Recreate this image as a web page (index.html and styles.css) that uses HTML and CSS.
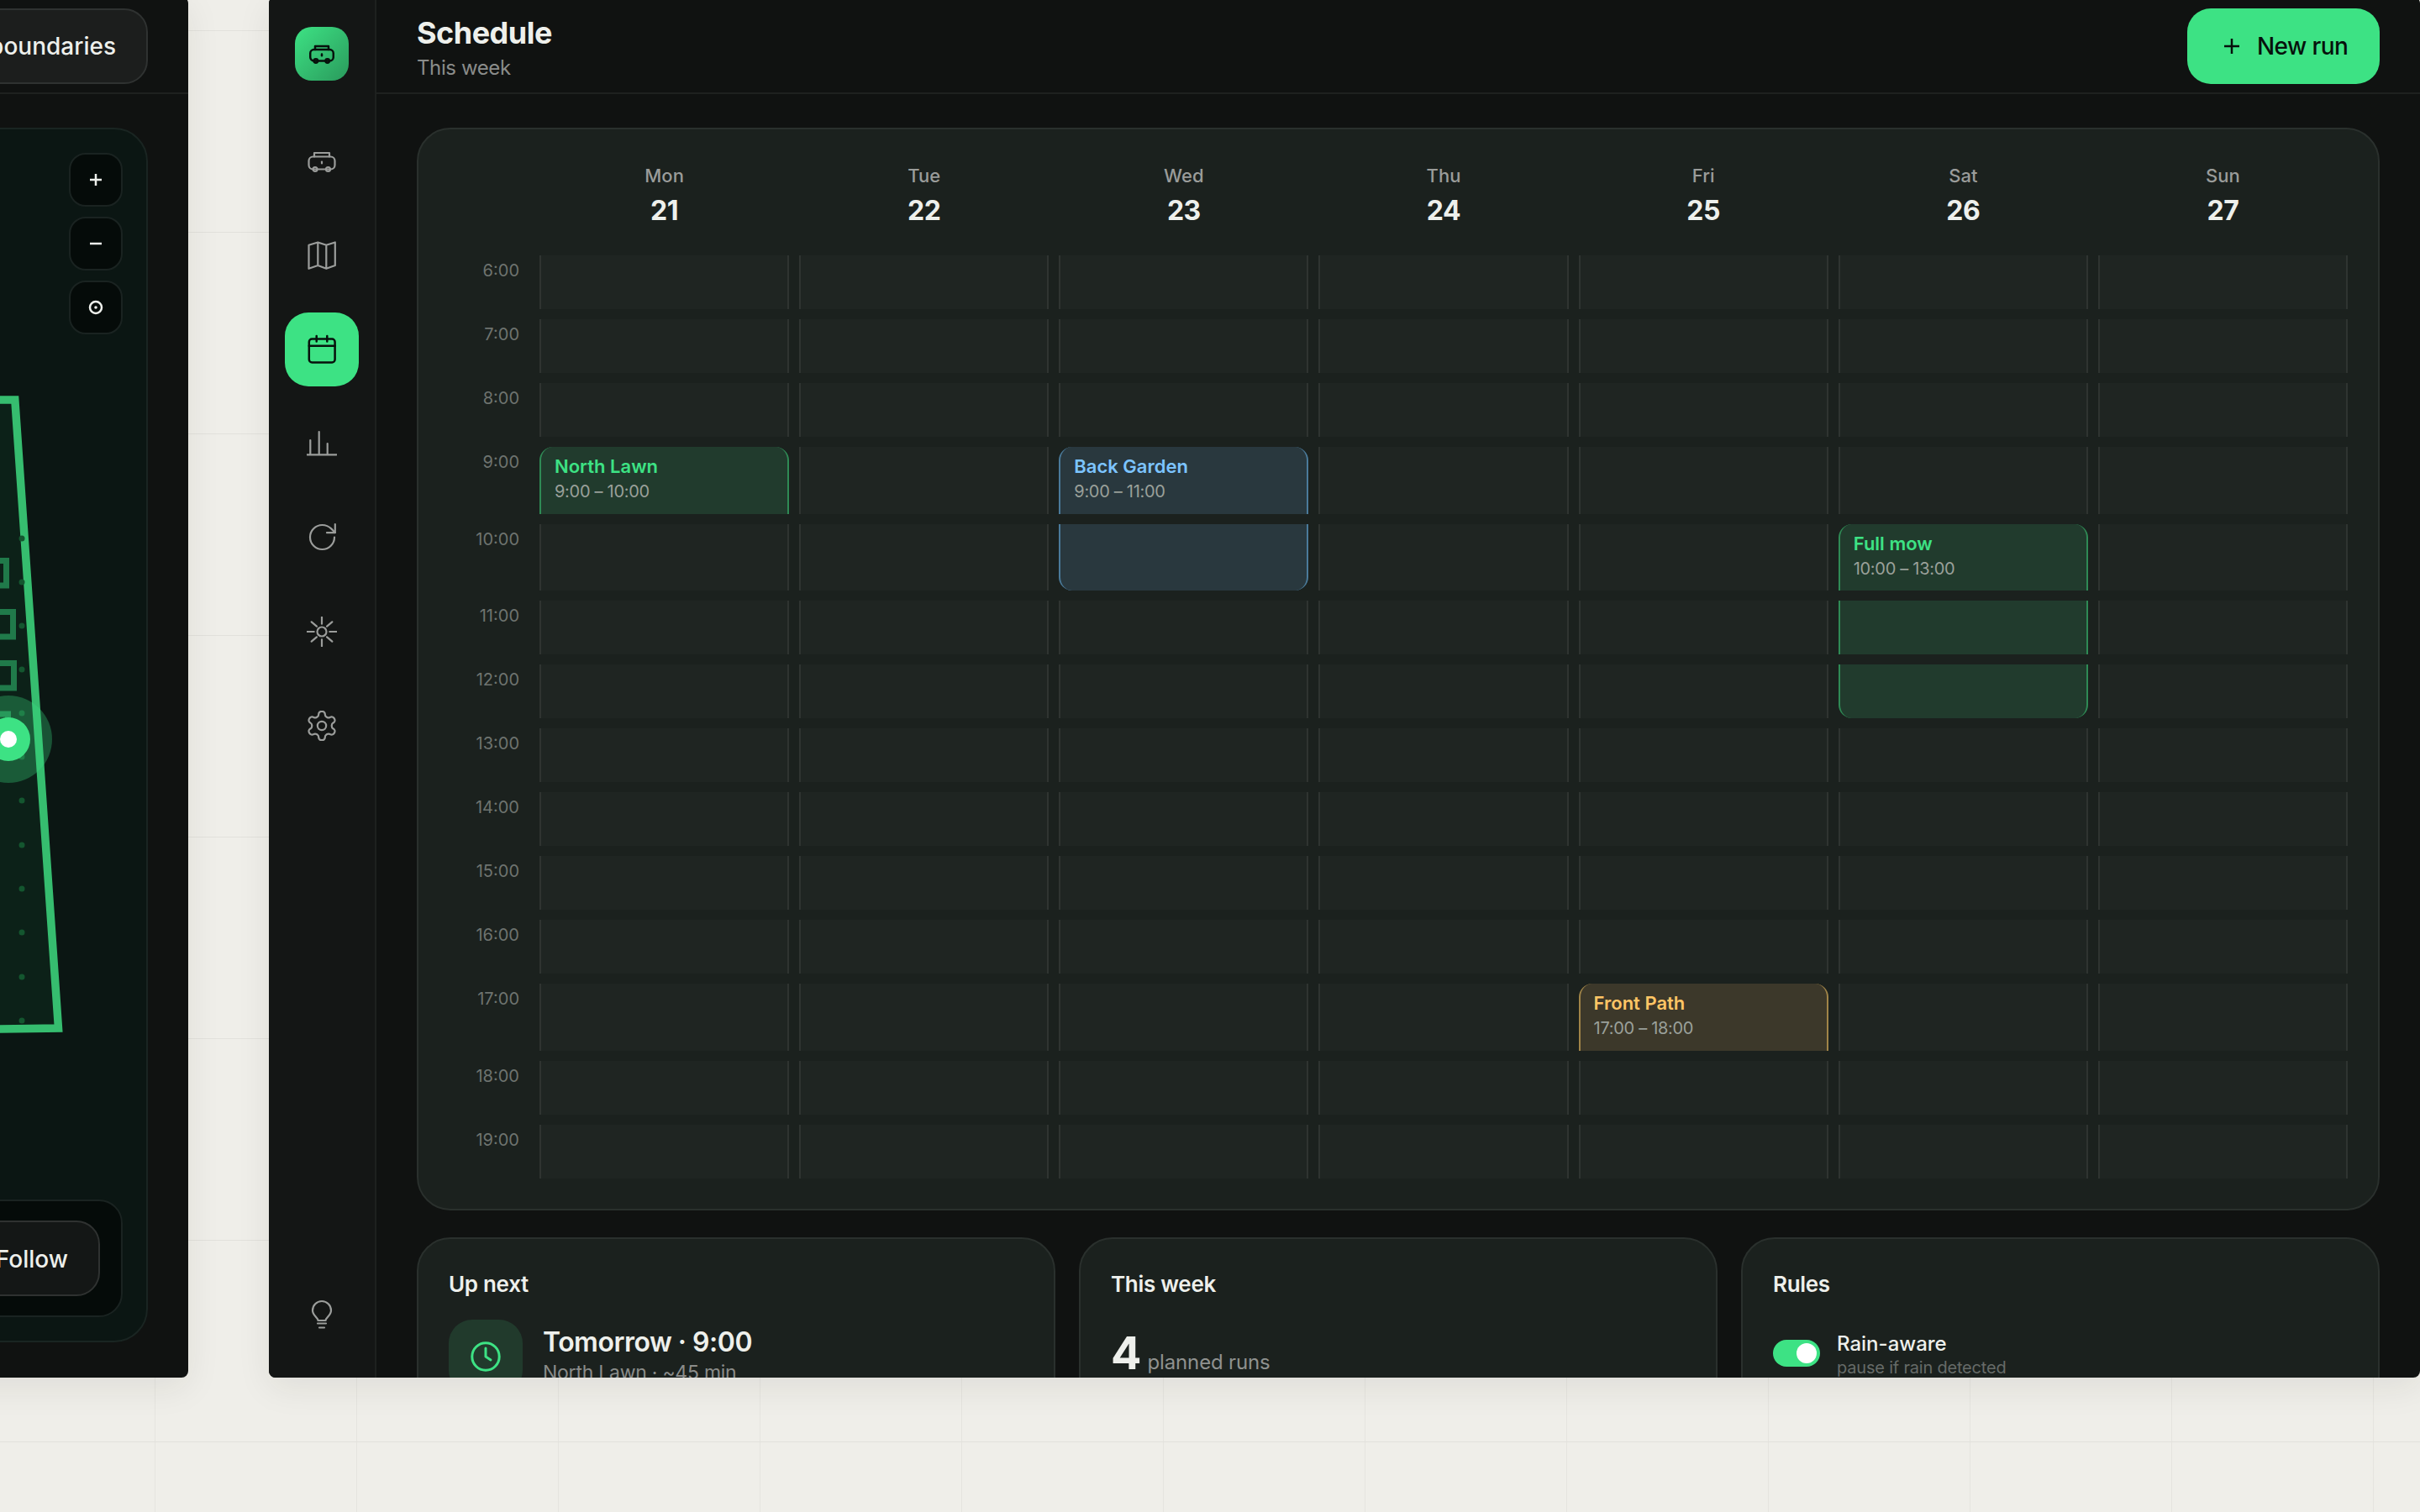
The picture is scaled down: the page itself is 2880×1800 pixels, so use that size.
FILE: index.html
```html
<!DOCTYPE html>
<html lang="en">
<head>
<meta charset="utf-8">
<title>Mower planner</title>
<link rel="stylesheet" href="styles.css">
</head>
<body>
<section class="window window-map">
  <header class="topbar topbar-end">
    <button class="ghost-btn">Edit boundaries</button>
  </header>
  <div class="map-main">
    <div class="map-card">
      <svg class="lawn" viewBox="0 152 176 1446" width="176" height="1446">
        <polygon class="lawn-shape" points="-60,476 17.8,476 69.5,1224 -60,1226"/>
        <g class="lawn-obstacle">
          <rect x="-30" y="667.5" width="37.5" height="29.5"/>
          <rect x="-30" y="728.5" width="45.5" height="29.5"/>
          <rect x="-30" y="789.5" width="46.5" height="29.5"/>
          <rect x="-30" y="850" width="39.5" height="30"/>
        </g>
        <g class="lawn-dots">
          <circle cx="26" cy="641" r="3.5"/><circle cx="26" cy="693" r="3.5"/><circle cx="26" cy="745" r="3.5"/><circle cx="26" cy="797" r="3.5"/><circle cx="26" cy="849" r="3.5"/><circle cx="26" cy="901" r="3.5"/><circle cx="26" cy="953" r="3.5"/><circle cx="26" cy="1006" r="3.5"/><circle cx="26" cy="1058" r="3.5"/><circle cx="26" cy="1110" r="3.5"/><circle cx="26" cy="1163" r="3.5"/><circle cx="26" cy="1215" r="3.5"/>
        </g>
        <circle class="mower-halo" cx="10" cy="880" r="52"/>
        <circle class="mower-ring" cx="10" cy="880" r="26"/>
        <circle class="mower-core" cx="10" cy="880" r="10"/>
      </svg>
      <div class="map-tools">
        <button class="tool"><svg viewBox="0 0 16 16" width="16" height="16"><path d="M8 1v14M1 8h14"/></svg></button>
        <button class="tool"><svg viewBox="0 0 16 16" width="16" height="16"><path d="M1 8h14"/></svg></button>
        <button class="tool"><svg viewBox="0 0 18 18" width="18" height="18"><circle cx="9" cy="9" r="7"/><circle class="tool-dot" cx="9" cy="9" r="1.8"/></svg></button>
      </div>
      <div class="map-actions"><button class="ghost-btn follow">Follow</button></div>
    </div>
  </div>
</section>

<section class="window window-schedule">
  <aside class="sidebar">
    <div class="logo">
      <svg class="icon logo-icon" viewBox="0 0 36 36"><rect x="2.5" y="12.5" width="31" height="15" rx="5"/><path d="M9 12.5V8h18v4.500"/><circle cx="10" cy="27.500" r="2.500"/><circle cx="25.500" cy="27.500" r="2.500"/><path d="M18 18.500v2"/></svg>
    </div>
    <nav class="nav">
      <a class="nav-item"><svg class="icon" viewBox="0 0 36 36"><rect x="2.500" y="12.500" width="31" height="15" rx="5"/><path d="M9 12.500V8h18v4.500"/><circle cx="10" cy="27.500" r="2.500"/><circle cx="25.500" cy="27.500" r="2.500"/><path d="M18 18.500v2"/></svg></a>
      <a class="nav-item"><svg class="icon" viewBox="0 0 36 36"><path d="M2.500 5.800 13.300 2.500 23.300 5.800 33.800 2.500V30L23.300 33.800 13.300 30 2.500 33.800zM13.300 2.500V30M23.300 5.800V33.800"/></svg></a>
      <a class="nav-item is-active"><svg class="icon" viewBox="0 0 36 36"><rect x="2.800" y="5.500" width="30.800" height="28" rx="3.500"/><path d="M2.800 13.800h30.800M11.700 2v6.500M24.300 2v6.500"/></svg></a>
      <a class="nav-item"><svg class="icon" viewBox="0 0 36 36"><path d="M.5 31.300h35M4.300 31.300V14M14.700 31.300V4M24.700 31.300V18"/></svg></a>
      <a class="nav-item"><svg class="icon" viewBox="0 0 36 36"><path d="M33 17.500a14.500 14.500 0 1 1-14.500-14.500c4 0 7.800 1.600 10.700 4.400L33.800 12"/><path d="M33.800 2v10.200H24"/></svg></a>
      <a class="nav-item"><svg class="icon" viewBox="0 0 36 36"><circle cx="18" cy="18" r="5.500"/><path d="M18 .7v8M18 27.300v8M.7 18h8M27.300 18h8M5.700 6.300l6.200 5.400M24.100 24.300l6.200 5.400M30.300 6.300l-6.200 5.400M11.900 24.300l-6.200 5.400"/></svg></a>
      <a class="nav-item"><svg class="icon" viewBox="1.500 1.500 21 21"><g class="gear"><path d="M12.220 2h-.44a2 2 0 0 0-2 2v.18a2 2 0 0 1-1 1.730l-.43.250a2 2 0 0 1-2 0l-.15-.08a2 2 0 0 0-2.730.730l-.22.380a2 2 0 0 0 .730 2.730l.15.100a2 2 0 0 1 1 1.720v.510a2 2 0 0 1-1 1.740l-.15.090a2 2 0 0 0-.730 2.730l.22.380a2 2 0 0 0 2.730.730l.15-.08a2 2 0 0 1 2 0l.43.250a2 2 0 0 1 1 1.730V20a2 2 0 0 0 2 2h.44a2 2 0 0 0 2-2v-.18a2 2 0 0 1 1-1.730l.43-.25a2 2 0 0 1 2 0l.15.08a2 2 0 0 0 2.730-.730l.22-.39a2 2 0 0 0-.730-2.730l-.15-.08a2 2 0 0 1-1-1.740v-.5a2 2 0 0 1 1-1.740l.15-.09a2 2 0 0 0 .730-2.730l-.22-.38a2 2 0 0 0-2.730-.730l-.15.08a2 2 0 0 1-2 0l-.43-.25a2 2 0 0 1-1-1.730V4a2 2 0 0 0-2-2z"/><circle cx="12" cy="12" r="3"/></g></svg></a>
    </nav>
    <a class="nav-item nav-bottom"><svg class="icon" viewBox="0 0 36 36"><path d="M13.500 26c-.5-4-6.500-6-6.500-12a11 11 0 0 1 22 0c0 6-6 8-6.500 12z"/><path d="M13 29.500h10M15 34.500h6"/></svg></a>
  </aside>
  <div class="content">
    <header class="topbar">
      <div class="title-block">
        <h1 class="title">Schedule</h1>
        <p class="subtitle">This week</p>
      </div>
      <button class="primary-btn"><svg class="plus" viewBox="0 0 20 20" width="20" height="20"><path d="M10 1v18M1 10h18"/></svg>New run</button>
    </header>
    <main class="page">
      <section class="calendar">
        <div class="cal-grid">
          <div></div>
          <div class="day"><span class="day-name">Mon</span><span class="day-num">21</span></div>
          <div class="day"><span class="day-name">Tue</span><span class="day-num">22</span></div>
          <div class="day"><span class="day-name">Wed</span><span class="day-num">23</span></div>
          <div class="day"><span class="day-name">Thu</span><span class="day-num">24</span></div>
          <div class="day"><span class="day-name">Fri</span><span class="day-num">25</span></div>
          <div class="day"><span class="day-name">Sat</span><span class="day-num">26</span></div>
          <div class="day"><span class="day-name">Sun</span><span class="day-num">27</span></div>

          <div class="hour">6:00</div><div class="cell"></div><div class="cell"></div><div class="cell"></div><div class="cell"></div><div class="cell"></div><div class="cell"></div><div class="cell"></div>
          <div class="hour">7:00</div><div class="cell"></div><div class="cell"></div><div class="cell"></div><div class="cell"></div><div class="cell"></div><div class="cell"></div><div class="cell"></div>
          <div class="hour">8:00</div><div class="cell"></div><div class="cell"></div><div class="cell"></div><div class="cell"></div><div class="cell"></div><div class="cell"></div><div class="cell"></div>
          <div class="hour">9:00</div>
          <div class="cell ev ev-green ev-first"><div class="ev-title">North Lawn</div><div class="ev-time">9:00 – 10:00</div></div>
          <div class="cell"></div>
          <div class="cell ev ev-blue ev-first"><div class="ev-title">Back Garden</div><div class="ev-time">9:00 – 11:00</div></div>
          <div class="cell"></div><div class="cell"></div><div class="cell"></div><div class="cell"></div>
          <div class="hour">10:00</div>
          <div class="cell"></div><div class="cell"></div>
          <div class="cell ev ev-blue ev-last"></div>
          <div class="cell"></div><div class="cell"></div>
          <div class="cell ev ev-green ev-first"><div class="ev-title">Full mow</div><div class="ev-time">10:00 – 13:00</div></div>
          <div class="cell"></div>
          <div class="hour">11:00</div><div class="cell"></div><div class="cell"></div><div class="cell"></div><div class="cell"></div><div class="cell"></div><div class="cell ev ev-green"></div><div class="cell"></div>
          <div class="hour">12:00</div><div class="cell"></div><div class="cell"></div><div class="cell"></div><div class="cell"></div><div class="cell"></div><div class="cell ev ev-green ev-last"></div><div class="cell"></div>
          <div class="hour">13:00</div><div class="cell"></div><div class="cell"></div><div class="cell"></div><div class="cell"></div><div class="cell"></div><div class="cell"></div><div class="cell"></div>
          <div class="hour">14:00</div><div class="cell"></div><div class="cell"></div><div class="cell"></div><div class="cell"></div><div class="cell"></div><div class="cell"></div><div class="cell"></div>
          <div class="hour">15:00</div><div class="cell"></div><div class="cell"></div><div class="cell"></div><div class="cell"></div><div class="cell"></div><div class="cell"></div><div class="cell"></div>
          <div class="hour">16:00</div><div class="cell"></div><div class="cell"></div><div class="cell"></div><div class="cell"></div><div class="cell"></div><div class="cell"></div><div class="cell"></div>
          <div class="hour">17:00</div><div class="cell"></div><div class="cell"></div><div class="cell"></div><div class="cell"></div>
          <div class="cell ev ev-amber ev-first"><div class="ev-title">Front Path</div><div class="ev-time">17:00 – 18:00</div></div>
          <div class="cell"></div><div class="cell"></div>
          <div class="hour">18:00</div><div class="cell"></div><div class="cell"></div><div class="cell"></div><div class="cell"></div><div class="cell"></div><div class="cell"></div><div class="cell"></div>
          <div class="hour">19:00</div><div class="cell"></div><div class="cell"></div><div class="cell"></div><div class="cell"></div><div class="cell"></div><div class="cell"></div><div class="cell"></div>
        </div>
      </section>
      <section class="summary">
        <article class="panel">
          <h2 class="panel-title">Up next</h2>
          <div class="next">
            <div class="next-tile"><svg class="clock" viewBox="0 0 36 36" width="36" height="36"><circle cx="18" cy="18" r="16.200"/><path d="M18 8v10l6 4"/></svg></div>
            <div class="next-text">
              <div class="next-main">Tomorrow · 9:00</div>
              <div class="next-sub">North Lawn · ~45 min</div>
            </div>
          </div>
        </article>
        <article class="panel">
          <h2 class="panel-title">This week</h2>
          <div class="stat"><span class="stat-num">4</span><span class="stat-label">planned runs</span></div>
        </article>
        <article class="panel">
          <h2 class="panel-title">Rules</h2>
          <div class="rule">
            <span class="toggle"><span class="toggle-knob"></span></span>
            <div class="rule-text">
              <div class="rule-name">Rain-aware</div>
              <div class="rule-desc">pause if rain detected</div>
            </div>
          </div>
        </article>
      </section>
    </main>
  </div>
</section>
</body>
</html>
```

FILE: styles.css
```css
* { box-sizing: border-box; }
html, body { height: 100%; }
body {
  margin: 0;
  overflow: hidden;
  font-family: "Inter", "Liberation Sans", sans-serif;
  background-color: #efeee9;
  background-image:
    linear-gradient(#e2e1dc 1px, transparent 1px),
    linear-gradient(90deg, #e5e4df 1px, transparent 1px);
  background-size: 240px 240px;
  background-position: 0 36px, 184px 0;
}
h1, h2, p { margin: 0; }
button { font-family: inherit; cursor: pointer; }

/* windows on the desktop */
.window {
  position: absolute;
  top: -4px;
  width: 2560px;
  height: 1644px;
  background: #101211;
  border-radius: 8px;
  overflow: hidden;
  box-shadow: 0 12px 40px rgba(40, 40, 30, .08);
}
.window-map { left: -2336px; display: flex; flex-direction: column; }
.window-schedule { left: 320px; display: flex; }

.topbar {
  flex: none;
  height: 116px;
  padding: 14px 48px 0;
  border-bottom: 2px solid #1e211f;
  display: flex;
  align-items: flex-start;
  justify-content: space-between;
}
.topbar-end { justify-content: flex-end; }

.ghost-btn {
  height: 90px;
  padding: 0 36px;
  border: 2px solid #2f3231;
  border-radius: 28px;
  background: #1c1e1d;
  color: #eef0ec;
  font-size: 28px;
  font-weight: 500;
}

/* map window */
.map-main { flex: 1; padding: 40px 48px 42px; display: flex; min-height: 0; }
.map-card {
  position: relative;
  flex: 1;
  background: #0b1613;
  border: 2px solid #1a2522;
  border-radius: 40px;
  overflow: hidden;
}
.lawn { position: absolute; right: -2px; top: -2px; }
.lawn-shape { fill: #0c2118; stroke: #36bd6f; stroke-width: 9.500; stroke-linejoin: miter; }
.lawn-obstacle rect { fill: none; stroke: #207a4a; stroke-width: 7; }
.lawn-dots circle { fill: #14562f; }
.mower-halo { fill: #3de284; opacity: .3; }
.mower-ring { fill: #3de284; }
.mower-core { fill: #fff; }
.map-tools {
  position: absolute;
  top: 28px;
  right: 28px;
  display: flex;
  flex-direction: column;
  gap: 12px;
}
.tool {
  width: 64px;
  height: 64px;
  padding: 0;
  display: flex;
  align-items: center;
  justify-content: center;
  background: #050b09;
  border: 2px solid #1a2321;
  border-radius: 20px;
}
.tool svg { fill: none; stroke: #eef0ec; stroke-width: 2.500; }
.tool .tool-dot { fill: #eef0ec; stroke: none; }
.map-actions {
  position: absolute;
  right: 28px;
  bottom: 28px;
  padding: 23px 25px;
  background: #050b09;
  border: 2px solid #1a2321;
  border-radius: 28px;
}
.follow { display: block; background: #141716; padding: 2px 36px 0 36px; }

/* schedule window */
.sidebar {
  flex: none;
  width: 128px;
  padding: 36px 0 32px;
  background: #141615;
  border-right: 2px solid #1e211f;
  display: flex;
  flex-direction: column;
  align-items: center;
}
.logo {
  width: 64px;
  height: 64px;
  flex: none;
  border-radius: 20px;
  background: linear-gradient(135deg, #3de284, #2a9a5c);
  display: flex;
  align-items: center;
  justify-content: center;
}
.icon {
  width: 36px;
  height: 36px;
  fill: none;
  stroke: #9b9d9b;
  stroke-width: 2.200;
  stroke-linecap: round;
  stroke-linejoin: round;
}
.logo-icon { width: 32px; height: 32px; stroke: #07110c; stroke-width: 2.800; }
.nav { margin-top: 52px; display: flex; flex-direction: column; gap: 24px; }
.nav-item {
  width: 88px;
  height: 88px;
  border-radius: 28px;
  display: flex;
  align-items: center;
  justify-content: center;
}
.nav-item.is-active { background: #3de284; }
.is-active .icon { stroke: #07110c; stroke-width: 2.500; }
.gear { stroke-width: 1.300; }
.nav-bottom { margin-top: auto; }

.content { flex: 1; min-width: 0; display: flex; flex-direction: column; }
.title { font-size: 36px; font-weight: 700; line-height: 44px; color: #eef0ec; letter-spacing: -.5px; }
.subtitle { font-size: 24px; line-height: 32px; color: #8a8c8a; margin-top: 4px; letter-spacing: -.4px; }
.title-block { padding-top: 7px; }
.primary-btn {
  width: 229px;
  height: 90px;
  display: flex;
  align-items: center;
  gap: 20px;
  padding: 0 0 0 43px;
  background: #3de284;
  border: 0;
  border-radius: 28px;
  color: #07110c;
  font-size: 28px;
  font-weight: 500;
  letter-spacing: -.6px;
}
.plus { fill: none; stroke: #07110c; stroke-width: 2.500; flex: none; }

.page { flex: 1; min-height: 0; padding: 40px 48px 0; display: flex; flex-direction: column; gap: 32px; }
.calendar {
  flex: none;
  background: #1b211e;
  border: 2px solid #2a302d;
  border-radius: 40px;
  padding: 36px;
}
.cal-grid {
  display: grid;
  grid-template-columns: 96px repeat(7, 1fr);
  gap: 12px;
}
.day { height: 102px; padding-top: 4px; display: flex; flex-direction: column; align-items: center; }
.day-name { font-size: 22px; line-height: 30px; font-weight: 500; color: #9a9c9a; }
.day-num { font-size: 32px; line-height: 44px; font-weight: 700; color: #eef0ec; margin-top: 5px; letter-spacing: -.5px; }
.hour { padding: 4px 12px 0 0; font-size: 20px; line-height: 28px; color: #6e736f; text-align: right; }
.cell {
  min-height: 64px;
  background: #1f2522;
  border-style: solid;
  border-color: #2f3431;
  border-width: 0 2px;
}
.ev { padding: 8px 16px 0; min-height: 64px; }
.ev-first { border-top-left-radius: 16px; border-top-right-radius: 16px; }
.ev-last { border-bottom-left-radius: 16px; border-bottom-right-radius: 16px; }
.ev-title { font-size: 22px; line-height: 30px; font-weight: 600; }
.ev-time { font-size: 20px; line-height: 28px; margin-top: 1px; padding-bottom: 12.500px; color: #9aa09a; letter-spacing: -.3px; }
.ev-green { background: #213b2d; border-color: #2f8a55; }
.ev-green .ev-title { color: #3de284; }
.ev-blue { background: #29383e; border-color: #4a7a9a; }
.ev-blue .ev-title { color: #7cc4ff; }
.ev-amber { background: #3c382a; border-color: #a08448; }
.ev-amber .ev-title { color: #ffc565; }

.summary { display: grid; grid-template-columns: repeat(3, 1fr); gap: 28px; flex: none; }
.panel {
  height: 300px;
  background: #1b211e;
  border: 2px solid #2a302d;
  border-radius: 40px;
  padding: 38px 36px 36px;
}
.panel-title { font-size: 26px; line-height: 32px; font-weight: 600; color: #eef0ec; letter-spacing: -.3px; }
.next { margin-top: 26px; display: flex; gap: 24px; }
.next-text { padding-top: 7px; }
.next-tile {
  width: 88px;
  height: 88px;
  flex: none;
  border-radius: 28px;
  background: #213a2c;
  display: flex;
  align-items: center;
  justify-content: center;
}
.clock { fill: none; stroke: #3de284; stroke-width: 3; stroke-linecap: round; stroke-linejoin: round; }
.next-main { font-size: 32px; line-height: 40px; font-weight: 600; color: #eef0ec; letter-spacing: -.5px; }
.next-sub { font-size: 23px; line-height: 30px; color: #8a8c8a; margin-top: 1px; letter-spacing: -.25px; }
.stat { margin-top: 32px; display: flex; align-items: baseline; gap: 7px; }
.stat-num { font-size: 54px; line-height: 68px; font-weight: 700; color: #eef0ec; }
.stat-label { font-size: 24px; color: #8f918f; letter-spacing: -.15px; }
.rule { margin-top: 26px; display: flex; align-items: flex-start; gap: 20px; }
.rule-text { padding-top: 14.500px; }
.toggle {
  width: 56px;
  height: 32px;
  flex: none;
  margin-top: 24px;
  padding: 4px;
  border-radius: 16px;
  background: #3de284;
  display: flex;
  justify-content: flex-end;
}
.toggle-knob { width: 24px; height: 24px; border-radius: 50%; background: #fff; }
.rule-name { font-size: 24px; line-height: 30px; font-weight: 500; color: #eef0ec; }
.rule-desc { font-size: 20px; line-height: 26px; color: #666b68; letter-spacing: -.2px; }
```
